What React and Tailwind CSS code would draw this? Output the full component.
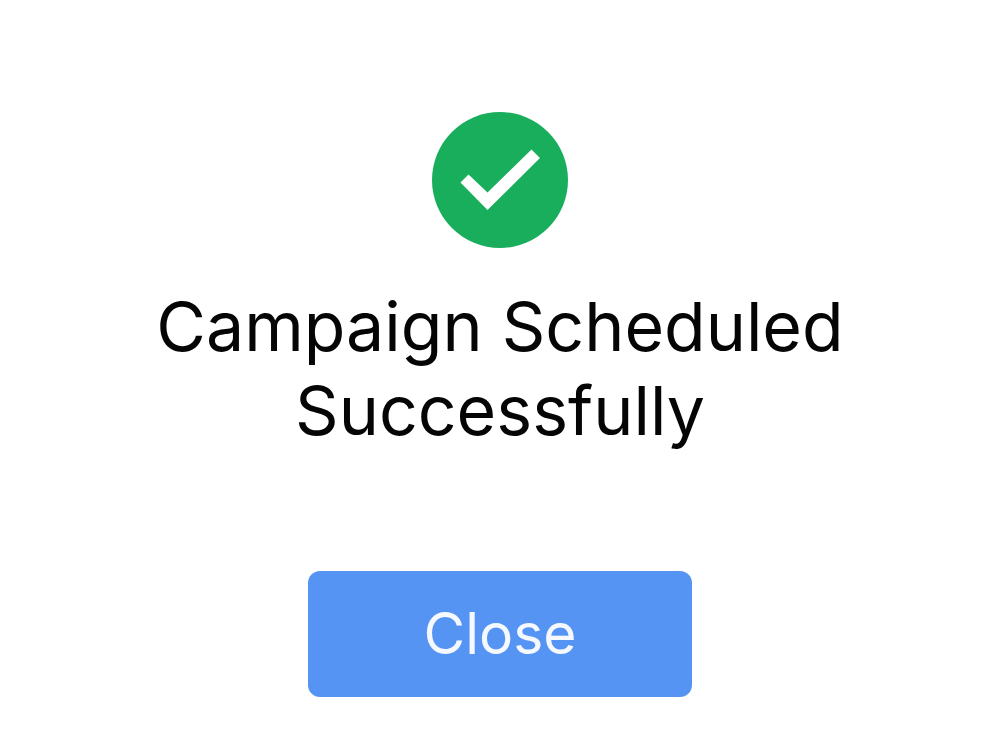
import { useState } from "react";

const SuccessIcon = () => (
  <svg viewBox="0 0 136 136" className="size-34" aria-hidden="true">
    <circle cx="68" cy="68" r="68" fill="#18ae5c" />
    <path d="M28.5 70.5 L36.5 62.5 L55.5 80.5 L99.5 37.5 L108 46 L55.5 98 Z" fill="#fff" />
  </svg>
);

const SuccessMessage = ({ message, onClose }) => (
  <main className="flex flex-col items-center px-8 pt-28 pb-13 text-center">
    <SuccessIcon />
    <h1 className="mt-9 max-w-[760px] text-[68px] leading-[84px] text-[#050505]">{message}</h1>
    <button
      type="button"
      onClick={onClose}
      className="mt-[119px] rounded-xl bg-[#5694f4] px-[116px] py-6 text-[57px] leading-[78px] text-[#f5f9ff] hover:bg-[#4785e8]"
    >
      Close
    </button>
  </main>
);

export default function App() {
  const [open, setOpen] = useState(true);

  return (
    <div className="min-h-screen bg-white font-['Inter',sans-serif]">
      {open && (
        <SuccessMessage
          message="Campaign Scheduled Successfully"
          onClose={() => setOpen(false)}
        />
      )}
    </div>
  );
}
